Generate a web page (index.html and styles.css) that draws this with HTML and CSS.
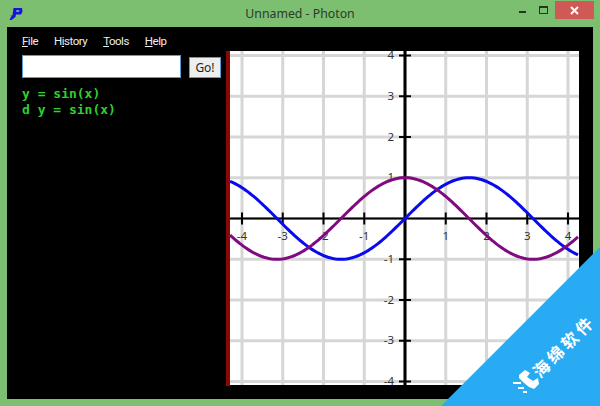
FILE: index.html
```html
<!DOCTYPE html>
<html>
<head>
  <meta charset="utf-8">
  <link rel="stylesheet" href="styles.css">
</head>
<body>
  <div class="window">
    <div class="titlebar">
      <svg class="app-icon" width="14" height="14" viewBox="0 0 14 14">
        <path d="M4.5 1H13L13.5 4.5L12 7.5H7L6.5 10L2.5 13H0.5L2.5 9L1 8.5H3.5Z" fill="#1414d8"/>
        <path d="M7.5 3H10.5L10 5H7Z" fill="#6f8fd8"/>
      </svg>
      <span class="title">Unnamed - Photon</span>
      <div class="controls">
        <span class="minimize"></span>
        <span class="maximize"></span>
        <span class="close">
          <svg width="9" height="9" viewBox="0 0 9 9"><path d="M1 1L8 8M8 1L1 8" stroke="#fff" stroke-width="2"/></svg>
        </span>
      </div>
    </div>
    <div class="client">
      <div class="sidebar">
        <div class="menu">
          <span><u>F</u>ile</span>
          <span>H<u>i</u>story</span>
          <span><u>T</u>ools</span>
          <span><u>H</u>elp</span>
        </div>
        <div class="query">
          <input type="text" class="query-input">
          <button class="go">Go!</button>
        </div>
        <div class="results">
          <div>y = sin(x)</div>
          <div>d y = sin(x)</div>
        </div>
      </div>
      <div class="splitter"></div>
      <svg id="plot" class="plot" width="349" height="334" viewBox="0 0 349 334"></svg>
    </div>
  </div>

  <div class="ribbon"></div>
  <svg class="ribbon-icon" width="50" height="50" viewBox="0 0 50 50">
    <path d="M9 25L15 20L20 23L17 27L23 31L28 28L29 34L24 39L19 37L13 32L9 28Z" fill="#fff"/>
    <path d="M3 33H11M8 38H14M13 42H17" stroke="#fff" stroke-width="2" fill="none"/>
  </svg>
  <div class="ribbon-label">海绵软件</div>

  <script src="plot.js"></script>
</body>
</html>
```

FILE: styles.css
```css
html, body {
  margin: 0;
  height: 100%;
}
body {
  position: relative;
  width: 600px;
  height: 406px;
  overflow: hidden;
  font-family: "Noto Sans", "Open Sans", sans-serif;
}
.window {
  display: flex;
  flex-direction: column;
  height: 406px;
  padding: 0 7px 7px;
  box-sizing: border-box;
  background-color: #7cbf70;
}
.titlebar {
  display: flex;
  align-items: flex-start;
  position: relative;
  height: 27px;
  flex-shrink: 0;
}
.app-icon {
  margin: 7px 0 0 2px;
}
.title {
  position: absolute;
  left: 0;
  right: 0;
  top: 5px;
  text-align: center;
  font-size: 12.3px;
  line-height: 18px;
  color: #2d3a2b;
}
.controls {
  display: flex;
  align-items: flex-start;
  margin-left: auto;
  margin-right: -1px;
  position: relative;
}
.minimize {
  width: 7px;
  height: 2px;
  margin: 11px 13px 0 0;
  background-color: #1f3a1b;
}
.maximize {
  width: 7px;
  height: 5px;
  margin: 6px 7px 0 0;
  border: 1px solid #1f3a1b;
  border-top-width: 2px;
  box-sizing: content-box;
}
.close {
  display: flex;
  align-items: center;
  justify-content: center;
  width: 39px;
  height: 18px;
  margin-top: 1px;
  background-color: #cf5a55;
}
.client {
  display: flex;
  flex: 1;
  background-color: #000;
  padding: 24px 14px 13px 0;
}
.sidebar {
  width: 219px;
  flex-shrink: 0;
  margin-top: -24px;
  padding-left: 15px;
  box-sizing: border-box;
}
.menu {
  display: flex;
  gap: 16px;
  height: 28px;
  align-items: center;
  font-family: Roboto, sans-serif;
  font-size: 11.5px;
  letter-spacing: -0.5px;
  color: #eee;
  box-sizing: border-box;
}
.query {
  display: flex;
  align-items: flex-end;
  gap: 8px;
}
.query-input {
  width: 159px;
  height: 23px;
  padding: 0;
  box-sizing: border-box;
  border: 1px solid #5b9bd5;
  background-color: #fff;
}
.go {
  width: 32px;
  height: 21px;
  padding: 0;
  font-family: inherit;
  font-size: 12px;
  color: #222;
  background-color: #eee;
  border: 1px solid #5b9bd5;
}
.results {
  margin-top: 8px;
  font-family: "DejaVu Sans Mono", monospace;
  font-size: 13px;
  font-weight: bold;
  line-height: 16px;
  color: #2fd02f;
}
.splitter {
  width: 4px;
  flex-shrink: 0;
  background-color: #880808;
}
.plot {
  display: block;
  overflow: visible;
  background-color: #fff;
}
.plot text {
  font-family: "Noto Sans", "Open Sans", sans-serif;
  font-size: 11.5px;
  fill: #333;
}
.ribbon {
  position: absolute;
  left: 0;
  top: 0;
  width: 600px;
  height: 406px;
  background-color: #29abf4;
  clip-path: polygon(600px 247px, 600px 406px, 441px 406px);
}
.ribbon-icon {
  position: absolute;
  left: 510px;
  top: 350px;
}
.ribbon-label {
  position: absolute;
  left: 500px;
  top: 365px;
  transform: translateX(35px) rotate(-45deg);
  transform-origin: left center;
  color: #fff;
  font-family: "Noto Sans CJK SC", sans-serif;
  font-size: 16.5px;
  line-height: 18px;
  letter-spacing: 3.5px;
  font-weight: bold;
  white-space: nowrap;
}
```

FILE: plot.js
```js
// draws the grid, axes and the two curves into the plot svg
var svg = document.getElementById('plot');
var UNIT = 40.75;
var CX = 175;
var CY = 167.5;
var W = 349;
var H = 334;

function add(tag, attrs, text) {
  var el = document.createElementNS('http://www.w3.org/2000/svg', tag);
  for (var k in attrs) el.setAttribute(k, attrs[k]);
  if (text) el.textContent = text;
  svg.appendChild(el);
}

function line(x1, y1, x2, y2, color, width) {
  add('line', { x1: x1, y1: y1, x2: x2, y2: y2, stroke: color, 'stroke-width': width });
}

function curve(fn, color) {
  var pts = [];
  for (var px = 0; px <= W; px += 2) {
    pts.push(px + ',' + (CY - fn((px - CX) / UNIT) * UNIT).toFixed(2));
  }
  add('polyline', { points: pts.join(' '), fill: 'none', stroke: color, 'stroke-width': 3 });
}

for (var i = -4; i <= 4; i++) {
  line(CX + i * UNIT, 0, CX + i * UNIT, H, '#d6d6d6', 3);
  line(0, CY + i * UNIT, W, CY + i * UNIT, '#d6d6d6', 3);
}

line(0, CY, W, CY, '#000', 2);
line(CX, 0, CX, H, '#000', 3);

for (var i = -4; i <= 4; i++) {
  if (i == 0) continue;
  line(CX + i * UNIT, CY - 6, CX + i * UNIT, CY + 6, '#000', 2);
  line(CX - 6, CY - i * UNIT, CX + 6, CY - i * UNIT, '#000', 2);
  add('text', { x: CX + i * UNIT, y: CY + 21, 'text-anchor': 'middle' }, String(i));
  add('text', { x: CX - 11, y: CY - i * UNIT + 3.5, 'text-anchor': 'end' }, String(i));
}

curve(Math.sin, '#0a0aee');
curve(Math.cos, '#800a80');
```
